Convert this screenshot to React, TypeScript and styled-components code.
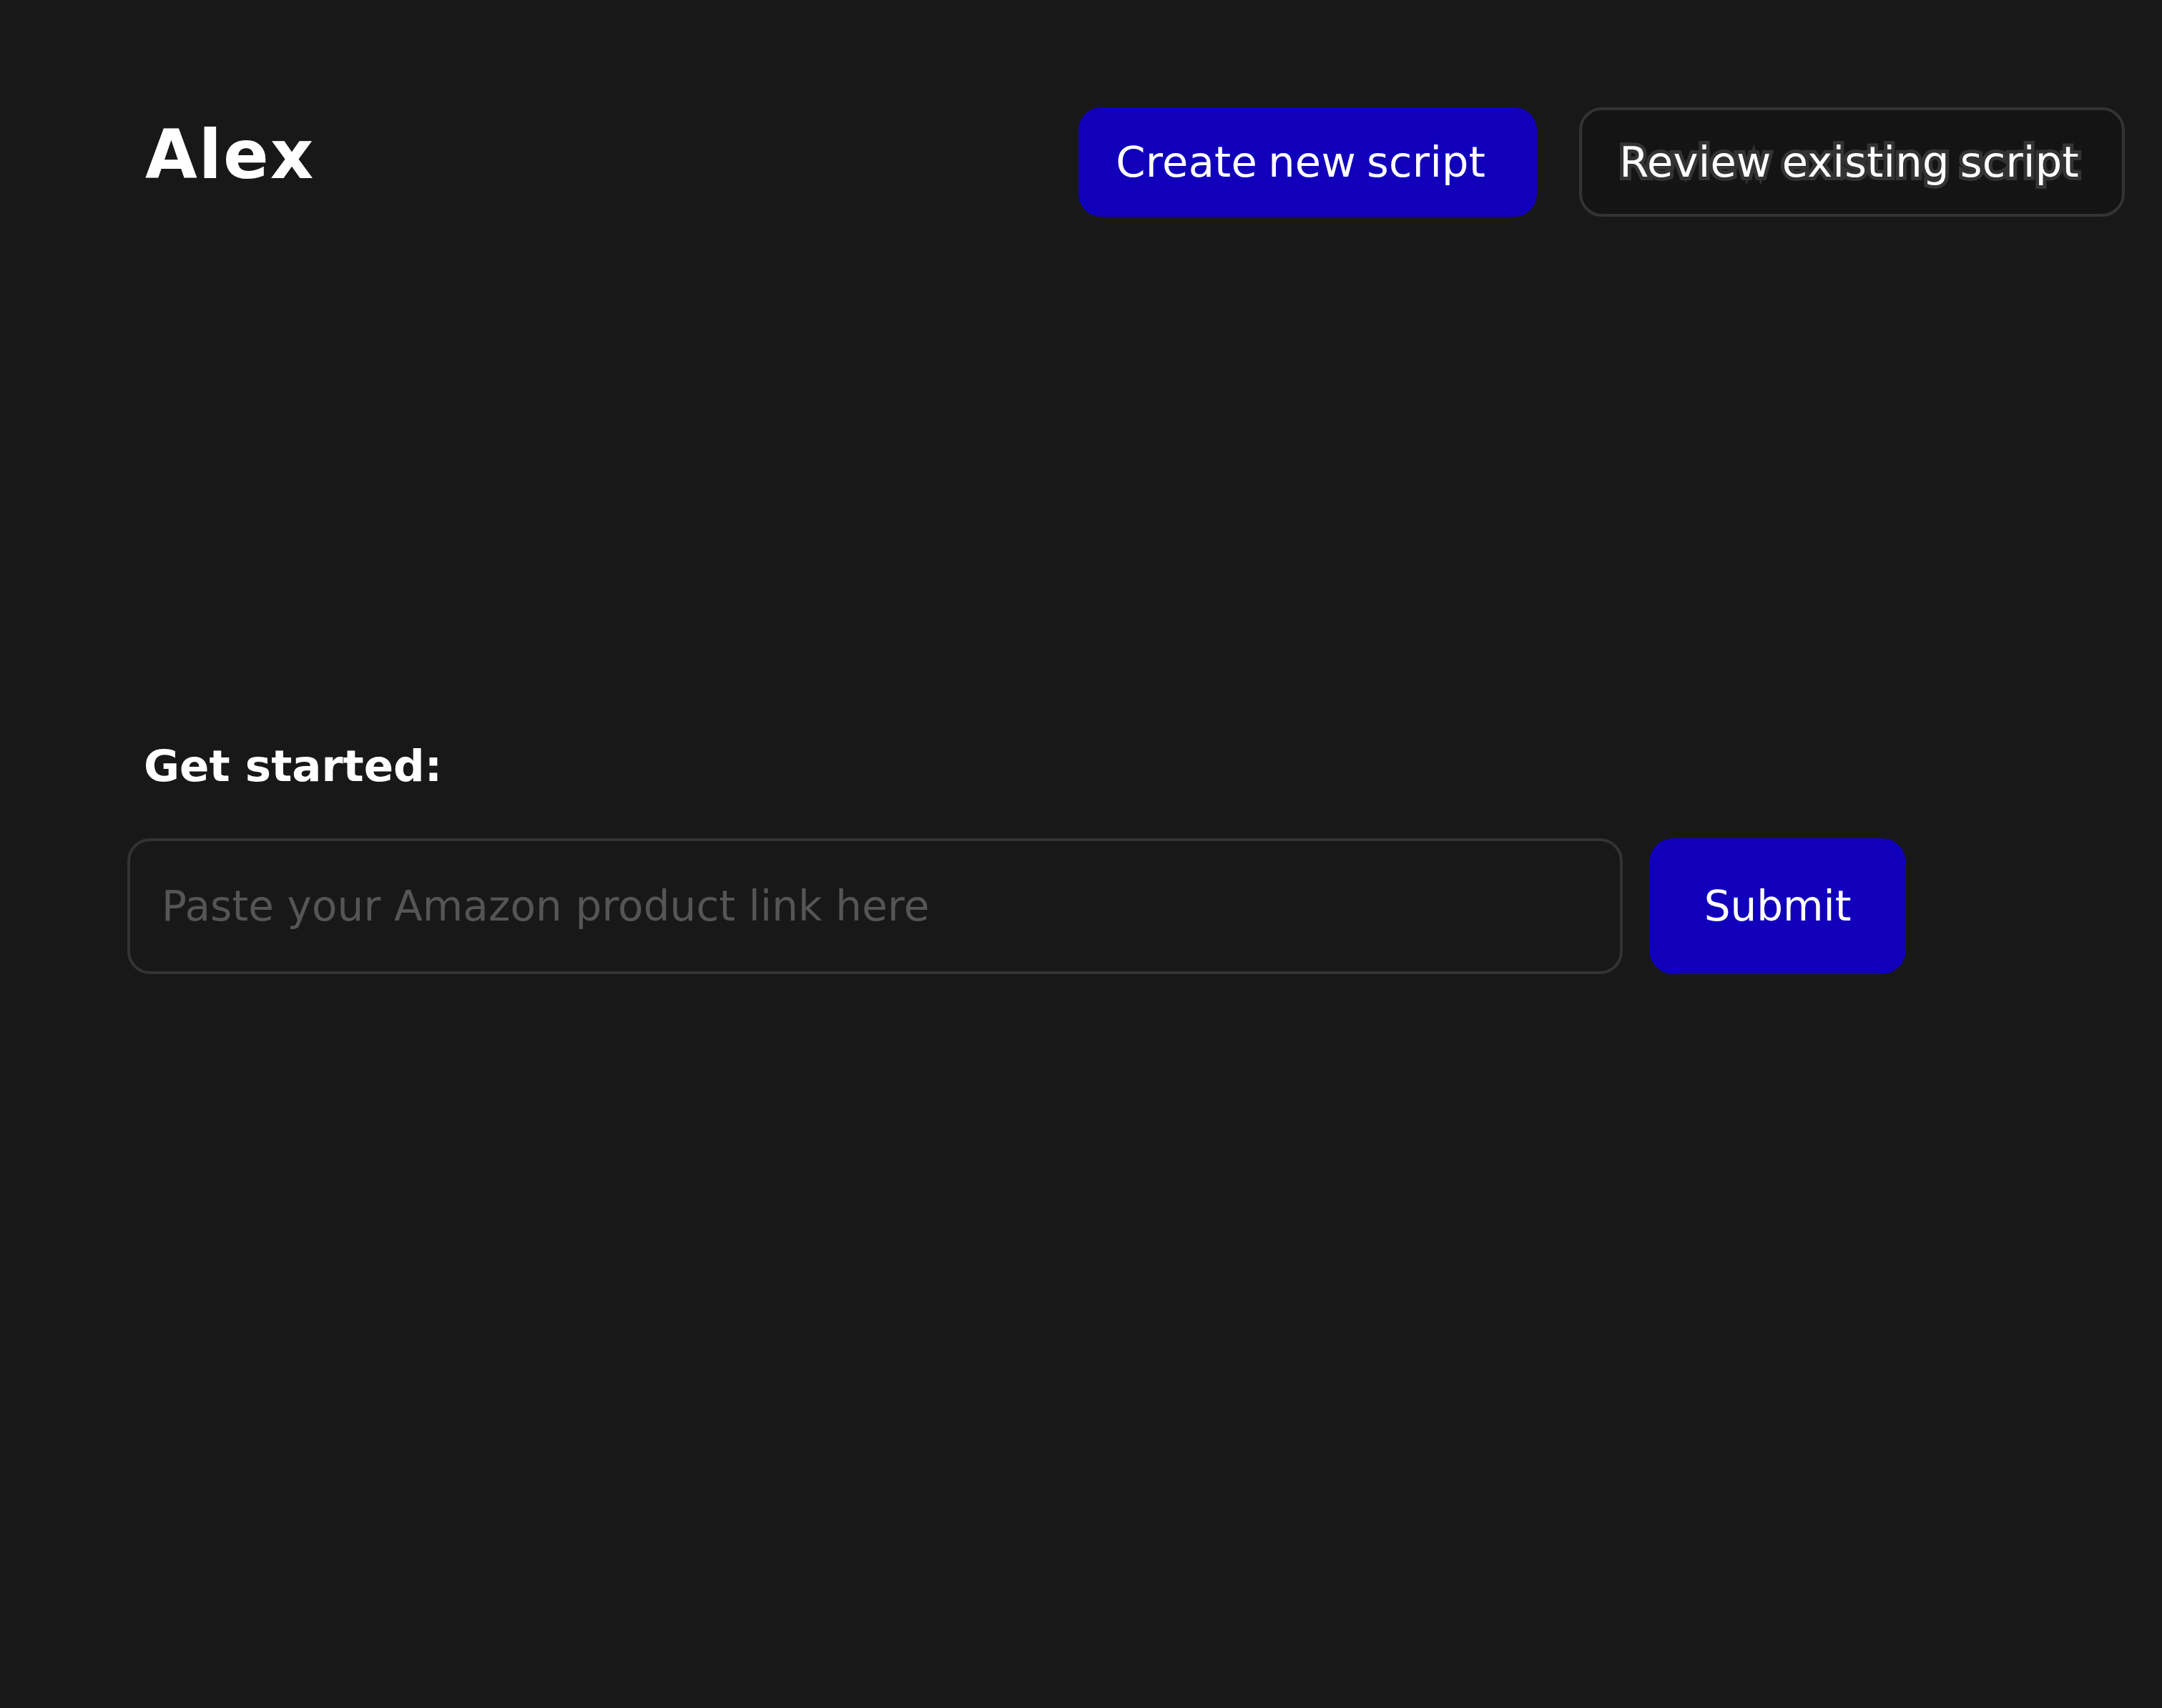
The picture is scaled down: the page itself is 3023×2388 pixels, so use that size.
import React from "react";
import styled, { createGlobalStyle } from "styled-components";

const GlobalStyle = createGlobalStyle`
  html, body {
    margin: 0;
    padding: 0;
    background: #181818;
  }
  * { box-sizing: border-box; }
`;

const Page = styled.div`
  min-height: 100vh;
  background: #181818;
  padding: 150px 52px 0 178px;
  font-family: "DejaVu Sans", "Liberation Sans", sans-serif;
  color: #ffffff;
`;

const Header = styled.header`
  display: flex;
  justify-content: space-between;
  align-items: flex-start;
`;

const Logo = styled.div`
  margin: 20px 0 0 25px;
  font-size: 94px;
  font-weight: 700;
  line-height: 1;
  letter-spacing: 2px;
`;

const Nav = styled.nav`
  display: flex;
  gap: 59px;
`;

const NavButton = styled.button<{ $primary?: boolean }>`
  height: 153px;
  padding: 0 ${(p) => (p.$primary ? "68px 0 48px" : "60px 0 52px")};
  border-radius: 32px;
  border: 4px solid ${(p) => (p.$primary ? "#1100bb" : "#333333")};
  background: ${(p) => (p.$primary ? "#1100bb" : "#141414")};
  color: #ffffff;
  font-family: "DejaVu Sans", "Liberation Sans", sans-serif;
  font-size: 59px;
  line-height: 1;
  letter-spacing: 0.3px;
  word-spacing: -4px;
  cursor: pointer;
  ${(p) =>
    p.$primary
      ? ""
      : `
    -webkit-text-stroke: 10px #333333;
    paint-order: stroke fill;
  `}
`;

const Main = styled.main`
  margin-top: 737px;
  display: flex;
  flex-direction: column;
`;

const Title = styled.h2`
  margin: 0 0 71px 23px;
  font-size: 61px;
  font-weight: 700;
  line-height: 1;
  letter-spacing: 0;
`;

const Form = styled.form`
  display: flex;
  gap: 37px;
  align-items: stretch;
`;

const LinkInput = styled.input`
  width: 2091px;
  height: 190px;
  padding: 0 44px;
  border: 4px solid #333333;
  border-radius: 32px;
  background: #181818;
  color: #ffffff;
  font-family: "DejaVu Sans", "Liberation Sans", sans-serif;
  font-size: 58px;
  letter-spacing: 0.1px;
  outline: none;
  &::placeholder {
    color: #555555;
  }
`;

const SubmitButton = styled.button`
  width: 359px;
  height: 190px;
  border: none;
  border-radius: 34px;
  background: #1100bb;
  color: #ffffff;
  font-family: "DejaVu Sans", "Liberation Sans", sans-serif;
  font-size: 58px;
  line-height: 1;
  cursor: pointer;
`;

export default function App() {
  return (
    <>
      <GlobalStyle />
      <Page>
        <Header>
          <Logo>Alex</Logo>
          <Nav>
            <NavButton $primary>Create new script</NavButton>
            <NavButton>Review existing script</NavButton>
          </Nav>
        </Header>
        <Main>
          <Title>Get started:</Title>
          <Form onSubmit={(e) => e.preventDefault()}>
            <LinkInput placeholder="Paste your Amazon product link here" />
            <SubmitButton type="submit">Submit</SubmitButton>
          </Form>
        </Main>
      </Page>
    </>
  );
}
